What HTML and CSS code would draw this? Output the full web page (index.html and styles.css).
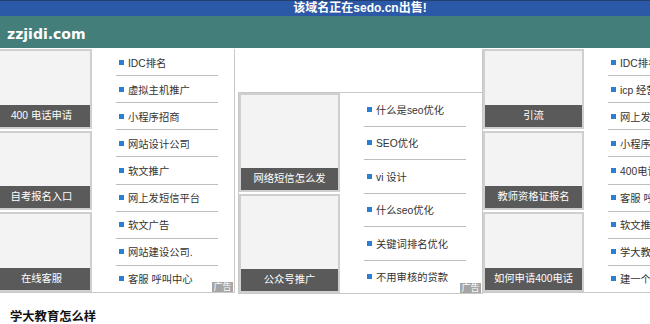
FILE: index.html
```html
<!DOCTYPE html>
<html lang="zh-CN">
<head>
  <meta charset="UTF-8">
  <title>zzjidi.com</title>
  <link rel="stylesheet" href="styles.css">
</head>
<body>
  <div class="sale">该域名正在sedo.cn出售!</div>
  <header class="top">
    <span class="logo">zzjidi.com</span>
  </header>

  <div class="ads">
    <div class="block first">
      <div class="pics">
        <div class="pic"><span class="cap">400 电话申请</span></div>
        <div class="pic"><span class="cap">自考报名入口</span></div>
        <div class="pic"><span class="cap">在线客服</span></div>
      </div>
      <ul class="links">
        <li><i></i>IDC排名</li>
        <li><i></i>虚拟主机推广</li>
        <li><i></i>小程序招商</li>
        <li><i></i>网站设计公司</li>
        <li><i></i>软文推广</li>
        <li><i></i>网上发短信平台</li>
        <li><i></i>软文广告</li>
        <li><i></i>网站建设公司.</li>
        <li><i></i>客服 呼叫中心</li>
      </ul>
      <span class="tag">广告</span>
    </div>

    <div class="block middle">
      <div class="pics">
        <div class="pic"><span class="cap">网络短信怎么发</span></div>
        <div class="pic"><span class="cap">公众号推广</span></div>
      </div>
      <ul class="links">
        <li><i></i>什么是seo优化</li>
        <li><i></i>SEO优化</li>
        <li><i></i>vi 设计</li>
        <li><i></i>什么seo优化</li>
        <li><i></i>关键词排名优化</li>
        <li><i></i>不用审核的贷款</li>
      </ul>
      <span class="tag">广告</span>
    </div>

    <div class="block last">
      <div class="pics">
        <div class="pic"><span class="cap">引流</span></div>
        <div class="pic"><span class="cap">教师资格证报名</span></div>
        <div class="pic"><span class="cap">如何申请400电话</span></div>
      </div>
      <ul class="links">
        <li><i></i>IDC排名</li>
        <li><i></i>icp 经营许可证</li>
        <li><i></i>网上发短信平台</li>
        <li><i></i>小程序招商</li>
        <li><i></i>400电话申请</li>
        <li><i></i>客服 呼叫中心</li>
        <li><i></i>软文推广</li>
        <li><i></i>学大教育怎么样</li>
        <li><i></i>建一个网站多少钱</li>
      </ul>
      <span class="tag">广告</span>
    </div>
  </div>

  <h2 class="title">学大教育怎么样</h2>
</body>
</html>
```

FILE: styles.css
```css
html, body {
  margin: 0;
  padding: 0;
  overflow: hidden;
  background: #fff;
  font-family: "Liberation Sans", "Noto Sans CJK SC", sans-serif;
  color: #333;
}
.sale {
  background: #2c59a7;
  border-top: 1px solid #22406f;
  height: 15px;
  line-height: 15px;
  color: #fff;
  font-size: 12px;
  font-weight: bold;
  text-align: center;
  padding-left: 70px;
}
.top {
  background: #447e7a;
  height: 32px;
  display: flex;
  align-items: center;
  padding-left: 7px;
}
.logo {
  font-family: "DejaVu Sans", sans-serif;
  font-weight: bold;
  font-size: 14px;
  color: #fff;
  margin-top: 4px;
}
.ads {
  display: flex;
  align-items: flex-start;
  padding-top: 1px;
  overflow: hidden;
}
.block {
  position: relative;
  flex-shrink: 0;
  display: flex;
  width: 243px;
  height: 243px;
  border: 1px solid #c8c8c8;
  border-top: none;
  background: #fff;
}
.block.first {
  margin-left: -10px;
}
.block.middle {
  margin-left: 3px;
  margin-top: 43px;
  height: 200px;
  border-top: 1px solid #c8c8c8;
}
.block.last {
  margin-left: -1px;
}
.pics {
  width: 101px;
  display: flex;
  flex-direction: column;
  gap: 2px;
}
.pic {
  flex: 1;
  display: flex;
  flex-direction: column;
  justify-content: flex-end;
  background: #f3f3f3;
  border: 2px solid #cfcfcf;
}
.cap {
  display: block;
  height: 22px;
  line-height: 22px;
  background: #5a5a5a;
  color: #fff;
  font-size: 10.3px;
  text-align: center;
}
.links {
  list-style: none;
  margin: 0 0 0 24px;
  padding: 0;
  width: 102px;
  display: flex;
  flex-direction: column;
}
.links li {
  flex: 1;
  display: flex;
  align-items: center;
  font-size: 10.3px;
  white-space: nowrap;
  border-bottom: 1px solid #bdbdbd;
}
.links li:last-child {
  border-bottom: none;
}
.links i {
  width: 5px;
  height: 5px;
  background: #2b7fd2;
  margin: 0 4px 0 3px;
  flex-shrink: 0;
}
.tag {
  position: absolute;
  right: 1px;
  bottom: 0;
  width: 21px;
  height: 10px;
  line-height: 10px;
  background: #a5a5a5;
  color: #fff;
  font-size: 9px;
  text-align: center;
}
.title {
  margin: 13px 0 0 10px;
  font-size: 12.3px;
  font-weight: bold;
  color: #111;
}
```
